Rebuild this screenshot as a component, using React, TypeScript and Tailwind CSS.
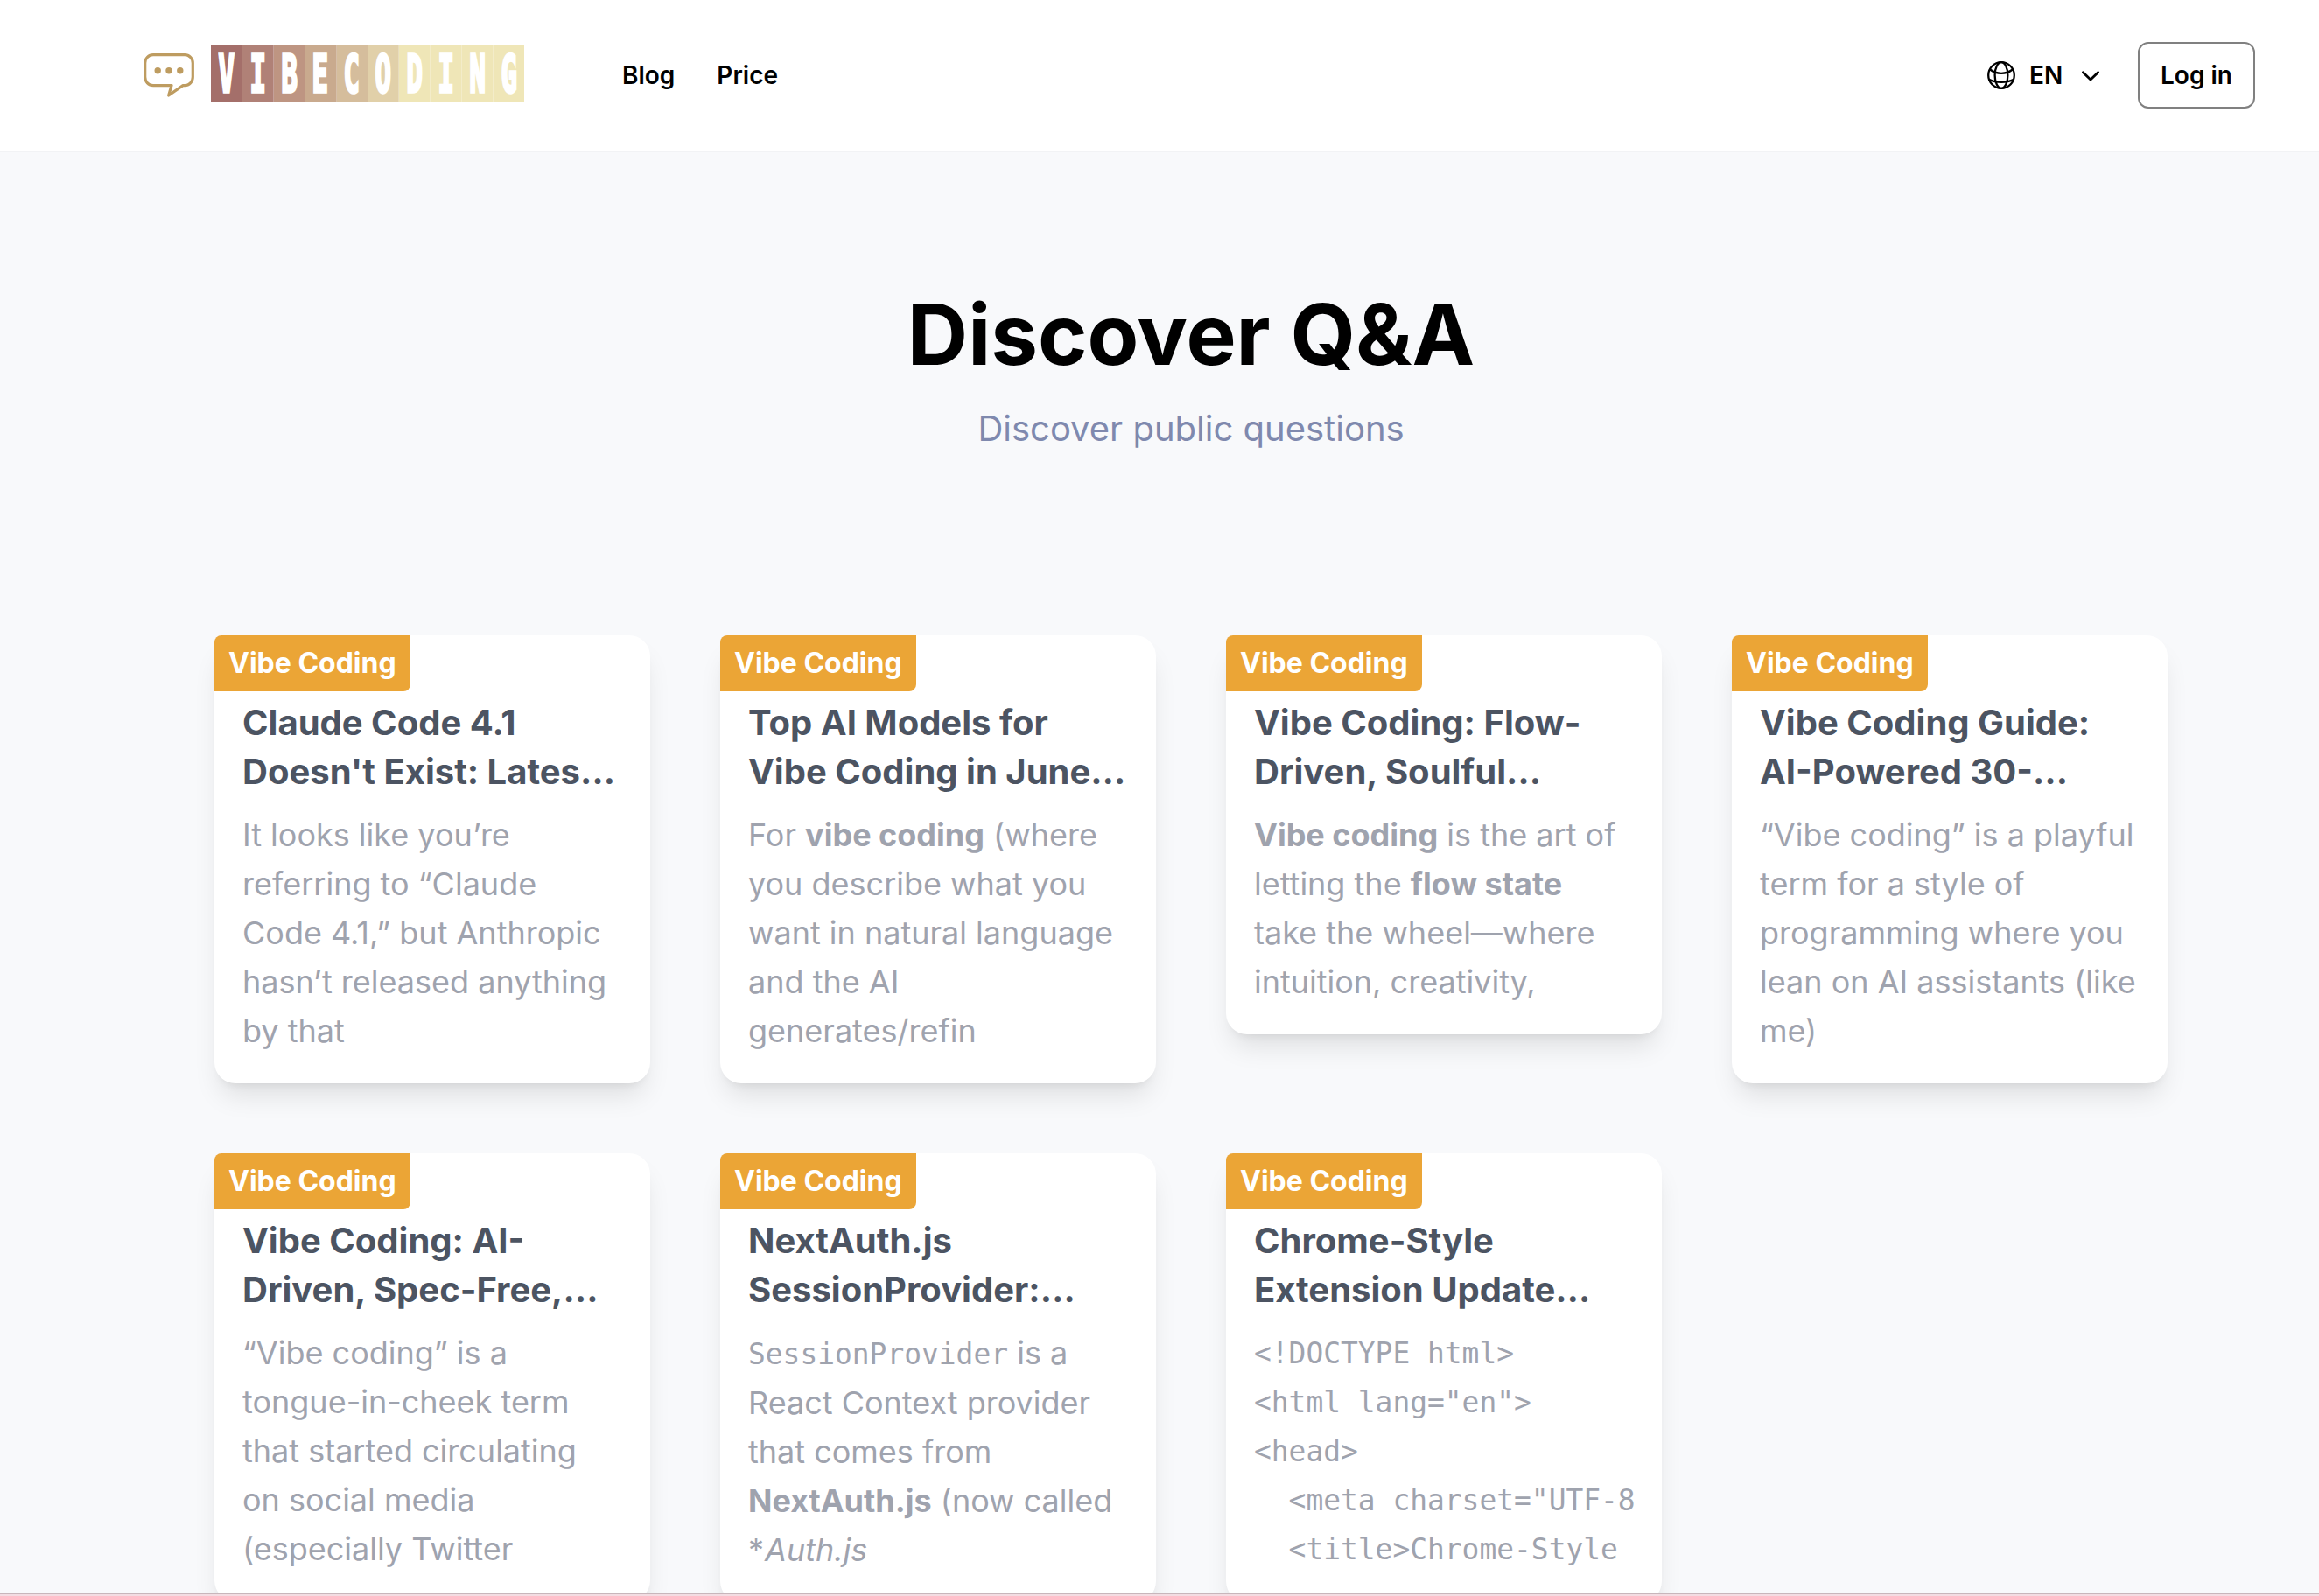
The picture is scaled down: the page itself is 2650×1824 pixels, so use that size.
import React from "react";

const tiles = [
  { letter: "V", color: "bg-[#a46f6a]" },
  { letter: "I", color: "bg-[#b08177]" },
  { letter: "B", color: "bg-[#be9582]" },
  { letter: "E", color: "bg-[#c9aa8e]" },
  { letter: "C", color: "bg-[#d5bd9c]" },
  { letter: "O", color: "bg-[#e1d0a9]" },
  { letter: "D", color: "bg-[#efe6b7]" },
  { letter: "I", color: "bg-[#efe6b7]" },
  { letter: "N", color: "bg-[#efe6b7]" },
  { letter: "G", color: "bg-[#efe6b7]" },
];

type Card = { title: string[]; body: React.ReactNode[]; code?: boolean };

const mono = "font-['DejaVu_Sans_Mono',monospace] text-[32.9px]";

const cards: Card[] = [
  {
    title: ["Claude Code 4.1", "Doesn't Exist: Lates…"],
    body: ["It looks like you’re", "referring to “Claude", "Code 4.1,” but Anthropic", "hasn’t released anything", "by that"],
  },
  {
    title: ["Top AI Models for", "Vibe Coding in June…"],
    body: [<>For <b>vibe coding</b> (where</>, "you describe what you", "want in natural language", "and the AI", "generates/refin"],
  },
  {
    title: ["Vibe Coding: Flow-", "Driven, Soulful…"],
    body: [<><b>Vibe coding</b> is the art of</>, <>letting the <b>flow state</b></>, "take the wheel—where", "intuition, creativity,"],
  },
  {
    title: ["Vibe Coding Guide:", "AI-Powered 30-…"],
    body: ["“Vibe coding” is a playful", "term for a style of", "programming where you", "lean on AI assistants (like", "me)"],
  },
  {
    title: ["Vibe Coding: AI-", "Driven, Spec-Free,…"],
    body: ["“Vibe coding” is a", "tongue-in-cheek term", "that started circulating", "on social media", "(especially Twitter"],
  },
  {
    title: ["NextAuth.js", "SessionProvider:…"],
    body: [
      <div className="h-[57px]"><code className={mono}>SessionProvider</code> is a</div>,
      "React Context provider",
      "that comes from",
      <><b>NextAuth.js</b> (now called</>,
      <>*<i className="ml-px">Auth.js</i></>,
    ],
  },
  {
    title: ["Chrome-Style", "Extension Update…"],
    code: true,
    body: ["<!DOCTYPE html>", "<html lang=\"en\">", "<head>", "  <meta charset=\"UTF-8", "  <title>Chrome-Style"],
  },
];

function Logo() {
  return (
    <a className="flex items-center">
      <svg className="h-[50px] w-[58px]" viewBox="0 0 58 50" fill="none">
        <path
          d="M11 1.7H47C52.200 1.700 56.300 5.800 56.300 11V27C56.300 32.400 52.200 36.600 47 36.600H45L28.700 48L32 36.600H11C5.800 36.600 1.700 32.400 1.700 27V11C1.700 5.800 5.800 1.700 11 1.700Z"
          stroke="#be9c60"
          strokeWidth="3.2"
          strokeLinejoin="round"
        />
        <circle cx="16.200" cy="19.800" r="3.700" fill="#be9c60" />
        <circle cx="29" cy="19.800" r="3.700" fill="#be9c60" />
        <circle cx="41.800" cy="19.800" r="3.700" fill="#be9c60" />
      </svg>
      <div className="mb-1 ml-[19px] flex h-16 w-[358px]">
        {tiles.map((t, i) => (
          <div key={i} className={`flex min-w-0 flex-1 items-center justify-center border-r border-white/25 last:border-r-0 ${t.color}`}>
            <span className="block shrink-0 scale-x-[0.52] pt-[2px] font-['DejaVu_Sans_Mono',monospace] text-[59px] leading-[64px] font-bold text-white [-webkit-text-stroke:3.5px_white]">
              {t.letter}
            </span>
          </div>
        ))}
      </div>
    </a>
  );
}

function Header() {
  return (
    <header className="flex h-[174px] shrink-0 items-center border-b-2 border-[#f2f3f5] bg-white pr-[73px] pl-[164px] text-[28px] leading-10 font-semibold text-black">
      <Logo />
      <nav className="ml-28 flex gap-12">
        <a>Blog</a>
        <a>Price</a>
      </nav>
      <div className="ml-auto flex items-center">
        <button className="flex items-center">
          <svg className="size-8" viewBox="0 0 32 32" fill="none" stroke="currentColor" strokeWidth="2.3">
            <circle cx="16" cy="16" r="14.800" />
            <ellipse cx="16" cy="16" rx="7.400" ry="14.800" />
            <path d="M3.200 9.500C10.500 15.300 21.500 15.300 28.800 9.500M1.900 20.700C10 24.900 22 24.900 30.100 20.700" />
          </svg>
          <span className="ml-4 w-[60px] text-left">EN</span>
          <svg className="mt-0.5 h-3 w-5" viewBox="0 0 20 12" fill="none" stroke="currentColor" strokeWidth="2.8" strokeLinecap="round" strokeLinejoin="round">
            <path d="M1.400 1.800L10 10L18.600 1.800" />
          </svg>
        </button>
        <button className="ml-11 h-[76px] w-[134px] rounded-xl border-2 border-[#808080]">Log in</button>
      </div>
    </header>
  );
}

function QuestionCard({ title, body, code }: Card) {
  return (
    <article className="rounded-3xl bg-white pb-8 shadow-[0_20px_30px_-6px_rgba(0,0,0,0.1),0_8px_12px_-8px_rgba(0,0,0,0.1)]">
      <div className="h-16 w-[224px] rounded-tl-lg rounded-br-lg bg-[#eba536] px-4 py-2 text-[32px] leading-[48px] font-bold whitespace-nowrap text-white">
        Vibe Coding
      </div>
      <div className="px-8 whitespace-pre">
        <h2 className="mt-2 text-[40px] leading-[56px] font-bold text-[#4c5462]">
          {title.map((line) => (
            <div key={line}>{line}</div>
          ))}
        </h2>
        <div className={`text-[36px] leading-[56px] text-[#9fa3ae] ${code ? "mt-[17px]" : "mt-4"}`}>
          {body.map((line, i) => (
            <div key={i} className={code ? mono : "min-h-14"}>
              {line}
            </div>
          ))}
        </div>
      </div>
    </article>
  );
}

export default function App() {
  return (
    <div className="flex h-[1824px] w-[2650px] flex-col overflow-hidden bg-[#f8f9fb] font-['Inter',sans-serif]">
      <Header />
      <main className="flex min-h-0 flex-1 flex-col overflow-hidden pr-[173px] pl-[245px]">
        <div className="mt-[160px] text-center">
          <h1 className="text-[96px] leading-[96px] font-bold text-black">Discover Q&amp;A</h1>
          <p className="mt-8 text-[40px] leading-[56px] text-[#7f89ae]">Discover public questions</p>
        </div>
        <section className="mt-52 grid grid-cols-4 items-start gap-20">
          {cards.map((card) => (
            <QuestionCard key={card.title.join(" ")} {...card} />
          ))}
        </section>
      </main>
      <footer className="h-1 shrink-0 border-t-2 border-[#c8b6bb] bg-[#f3dce2]" />
    </div>
  );
}
